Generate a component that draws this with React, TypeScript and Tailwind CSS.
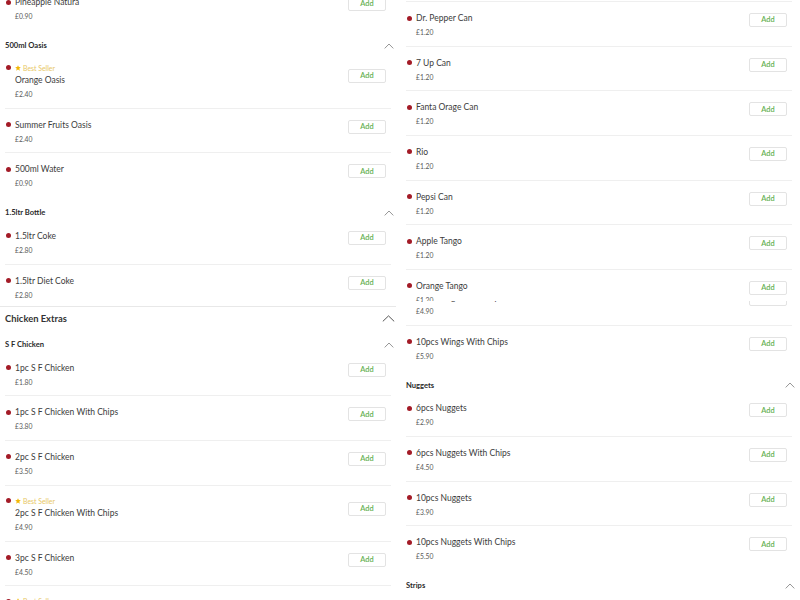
import React from "react";

type Item = { name: string; price: string; best?: boolean; last?: boolean; h?: string };

const font = { fontFamily: "Lato, 'Open Sans', Arial, sans-serif" };

function Chevron({ big }: { big?: boolean }) {
  return big ? (
    <svg width="13" height="7" viewBox="0 0 13 7" fill="none">
      <path d="M0.8 6.4 L6.5 0.9 L12.2 6.4" stroke="#555" strokeWidth="1" />
    </svg>
  ) : (
    <svg width="10" height="6" viewBox="0 0 10 6" fill="none">
      <path d="M0.7 5.4 L5 1 L9.3 5.4" stroke="#8a8a8a" strokeWidth="0.9" />
    </svg>
  );
}

function AddBtn({ mt }: { mt: string }) {
  return (
    <div
      className={`${mt} w-[38px] h-[14px] shrink-0 border border-[#e3e3e3] rounded-[2px] flex items-center justify-center text-[7.4px] font-semibold text-[#66b052] bg-white`}
    >
      Add
    </div>
  );
}

function Row({ item }: { item: Item }) {
  const border = item.last ? "" : "border-b border-[#efefef]";
  if (item.best) {
    return (
      <div className={`mx-[5px] pr-[5px] h-[56px] pt-[10px] flex items-start ${border}`}>
        <div className="ml-[1px] mt-[2.5px] w-[5px] h-[5px] rounded-full bg-[#a31b27] shrink-0" />
        <div className="ml-[4px] flex-1 min-w-0">
          <div className="h-[10px] flex items-center gap-[2px] text-[6.9px] leading-[10px] text-[#e8c766]">
            <svg width="6" height="6" viewBox="0 0 10 10">
              <path d="M5 0.3 L6.4 3.4 L9.7 3.7 L7.2 6 L7.9 9.4 L5 7.7 L2.1 9.4 L2.8 6 L0.3 3.7 L3.6 3.4 Z" fill="#f2b705" />
            </svg>
            <span>Best Seller</span>
          </div>
          <div className="mt-[1px] h-[12px] leading-[12px] text-[8.5px] text-[#3c3c3c]">{item.name}</div>
          <div className="mt-[2px] h-[12px] leading-[12px] text-[6.8px] text-[#5a5a5a]">{item.price}</div>
        </div>
        <AddBtn mt="mt-[6px]" />
      </div>
    );
  }
  return (
    <div className={`mx-[5px] pr-[5px] ${item.h ?? "h-[44.67px]"} pt-[10px] flex items-start ${border}`}>
      <div className="ml-[1px] mt-[3.5px] w-[5px] h-[5px] rounded-full bg-[#a31b27] shrink-0" />
      <div className="ml-[4px] flex-1 min-w-0">
        <div className="h-[12px] leading-[12px] text-[8.5px] text-[#3c3c3c] whitespace-nowrap">{item.name}</div>
        <div className="mt-[2px] h-[12px] leading-[12px] text-[6.8px] text-[#5a5a5a]">{item.price}</div>
      </div>
      <AddBtn mt="mt-[1px]" />
    </div>
  );
}

function SubHeader({ title }: { title: string }) {
  return (
    <div className="h-[22px] pt-[8px] pl-[5px] pr-[2px] flex items-center justify-between">
      <span className="text-[7.6px] font-bold text-[#2a2a2a]">{title}</span>
      <Chevron />
    </div>
  );
}

function CatHeader({ title }: { title: string }) {
  return (
    <div className="h-[23px] pt-[1px] pl-[5px] pr-[1px] flex items-center justify-between">
      <span className="text-[9.4px] font-bold text-[#333]">{title}</span>
      <Chevron big />
    </div>
  );
}

export default function App() {
  return (
    <div className="w-[800px] h-[600px] overflow-hidden bg-white" style={font}>
      <div className="grid grid-cols-[396px_396px] gap-x-[5px] h-full">
        {/* Left column */}
        <div className="overflow-hidden">
          <div className="mt-[-14px]">
            <Row item={{ name: "Pineapple Natura", price: "£0.90", last: true }} />
            <SubHeader title="500ml Oasis" />
            <Row item={{ name: "Orange Oasis", price: "£2.40", best: true }} />
            <Row item={{ name: "Summer Fruits Oasis", price: "£2.40" }} />
            <Row item={{ name: "500ml Water", price: "£0.90", last: true }} />
            <SubHeader title="1.5ltr Bottle" />
            <Row item={{ name: "1.5ltr Coke", price: "£2.80" }} />
            <Row item={{ name: "1.5ltr Diet Coke", price: "£2.80", last: true, h: "h-[41px]" }} />
            <div className="border-b border-[#e8e8e8]" />
            <CatHeader title="Chicken Extras" />
            <SubHeader title="S F Chicken" />
            <Row item={{ name: "1pc S F Chicken", price: "£1.80" }} />
            <Row item={{ name: "1pc S F Chicken With Chips", price: "£3.80" }} />
            <Row item={{ name: "2pc S F Chicken", price: "£3.50" }} />
            <Row item={{ name: "2pc S F Chicken With Chips", price: "£4.90", best: true }} />
            <Row item={{ name: "3pc S F Chicken", price: "£4.50" }} />
            <Row item={{ name: "3pc S F Chicken With Chips", price: "£5.90", best: true }} />
          </div>
        </div>
        {/* Right column */}
        <div className="flex flex-col h-full overflow-hidden">
          <div className="h-[301px] shrink-0 overflow-hidden">
            <div className="mt-[-42.67px]">
              <Row item={{ name: "Coke Can", price: "£1.20" }} />
              <Row item={{ name: "Dr. Pepper Can", price: "£1.20" }} />
              <Row item={{ name: "7 Up Can", price: "£1.20" }} />
              <Row item={{ name: "Fanta Orage Can", price: "£1.20" }} />
              <Row item={{ name: "Rio", price: "£1.20" }} />
              <Row item={{ name: "Pepsi Can", price: "£1.20" }} />
              <Row item={{ name: "Apple Tango", price: "£1.20" }} />
              <Row item={{ name: "Orange Tango", price: "£1.20" }} />
            </div>
          </div>
          <div className="flex-1 overflow-hidden">
            <div className="mt-[-20px]">
              <Row item={{ name: "6pcs Wings With Chips", price: "£4.90" }} />
              <Row item={{ name: "10pcs Wings With Chips", price: "£5.90", last: true }} />
              <SubHeader title="Nuggets" />
              <Row item={{ name: "6pcs Nuggets", price: "£2.90" }} />
              <Row item={{ name: "6pcs Nuggets With Chips", price: "£4.50" }} />
              <Row item={{ name: "10pcs Nuggets", price: "£3.90" }} />
              <Row item={{ name: "10pcs Nuggets With Chips", price: "£5.50", last: true }} />
              <SubHeader title="Strips" />
            </div>
          </div>
        </div>
      </div>
    </div>
  );
}
